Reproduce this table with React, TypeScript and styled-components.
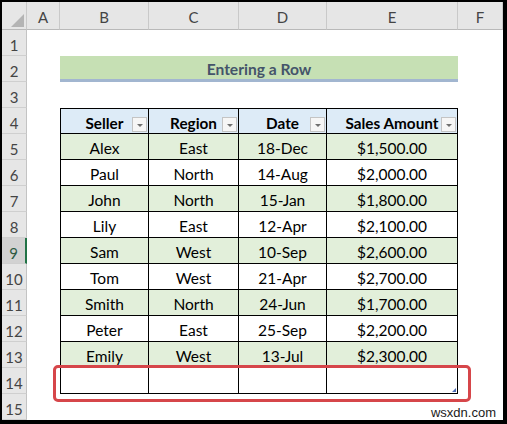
import React from "react";
import styled, { createGlobalStyle, css } from "styled-components";

const Global = createGlobalStyle`
  html, body { margin: 0; padding: 0; background: #000; }
  body { width: 507px; height: 424px; overflow: hidden; }
`;

const Frame = styled.div`
  position: relative;
  margin: 2px 0 0 2px;
  width: 501px;
  height: 418px;
  background: #fff;
  overflow: hidden;
  font-family: Lato, "Liberation Sans", sans-serif;
`;

const Sheet = styled.div`
  display: grid;
  grid-template-columns: 25px 33px 89px 90px 88px 131px 45px;
  grid-template-rows: 28px repeat(15, 26px);
`;

const Corner = styled.div`
  position: relative;
  background: #e6e6e6;
  border-right: 1px solid #c9c9c9;
  border-bottom: 1px solid #b9b9b9;
  box-sizing: border-box;
  &::after {
    content: "";
    position: absolute;
    right: 2px;
    bottom: 2px;
    width: 13px;
    height: 13px;
    background: #b4b4b4;
    clip-path: polygon(100% 0, 100% 100%, 0 100%);
  }
`;

const ColHead = styled.div`
  background: #e6e6e6;
  border-right: 1px solid #c9c9c9;
  border-bottom: 1px solid #b9b9b9;
  box-sizing: border-box;
  display: flex;
  align-items: center;
  justify-content: center;
  padding-top: 2px;
  font-size: 15px;
  color: #444;
`;

const RowHead = styled.div<{ $active?: boolean }>`
  background: ${(p) => (p.$active ? "#d2d2d2" : "#e6e6e6")};
  border-bottom: 1px solid #cfcfcf;
  border-right: ${(p) => (p.$active ? "2px solid #217346" : "1px solid #c3c3c3")};
  box-sizing: border-box;
  display: flex;
  align-items: center;
  justify-content: center;
  padding-top: 5px;
  font-size: 15px;
  color: ${(p) => (p.$active ? "#2f5a43" : "#444")};
`;

const Blank = styled.div``;

const Title = styled.div`
  grid-column: span 4;
  background: #c6e0b4;
  border-bottom: 3px solid #a2b6d0;
  box-sizing: border-box;
  display: flex;
  align-items: center;
  justify-content: center;
  padding-top: 2px;
  font-size: 15.6px;
  font-weight: 700;
  color: #44546a;
`;

const Cell = styled.div<{ $kind: "head" | "green" | "white"; $first?: boolean; $top?: boolean }>`
  position: relative;
  box-sizing: border-box;
  border-right: 1px solid #000;
  border-bottom: 1px solid #000;
  ${(p) => p.$first && css`border-left: 1px solid #000;`}
  ${(p) => p.$top && css`border-top: 1px solid #000;`}
  background: ${(p) => (p.$kind === "head" ? "#ddebf7" : p.$kind === "green" ? "#e2efda" : "#fff")};
  display: flex;
  align-items: center;
  justify-content: center;
  padding-top: 3px;
  font-size: ${(p) => (p.$kind === "head" ? "15.3px" : "15.5px")};
  font-weight: ${(p) => (p.$kind === "head" ? 700 : 400)};
  color: #000;
`;

const Filter = styled.span`
  position: absolute;
  right: 1px;
  bottom: 1px;
  width: 15px;
  height: 15px;
  box-sizing: border-box;
  border: 1px solid #c4c4c4;
  background: #f6f6f6;
  &::after {
    content: "";
    position: absolute;
    left: 4px;
    top: 6px;
    width: 0;
    height: 0;
    border-left: 3px solid transparent;
    border-right: 3px solid transparent;
    border-top: 3px solid #6f6f6f;
  }
`;

const Handle = styled.span`
  position: absolute;
  right: 1px;
  bottom: 1px;
  width: 4px;
  height: 4px;
  background: #4a6bb5;
  clip-path: polygon(100% 0, 100% 100%, 0 100%);
`;

const Highlight = styled.div`
  position: absolute;
  left: 51px;
  top: 363px;
  width: 418px;
  height: 37px;
  box-sizing: border-box;
  border: 3px solid #d6464a;
  border-radius: 5px;
  pointer-events: none;
`;

const Watermark = styled.div`
  position: absolute;
  right: 7px;
  bottom: 0px;
  font-family: "Liberation Sans", Arial, sans-serif;
  font-size: 13px;
  line-height: 14px;
  color: #1a1a1a;
`;

const headers = ["Seller", "Region", "Date", "Sales Amount"];
const data: string[][] = [
  ["Alex", "East", "18-Dec", "$1,500.00"],
  ["Paul", "North", "14-Aug", "$2,000.00"],
  ["John", "North", "15-Jan", "$1,800.00"],
  ["Lily", "East", "12-Apr", "$2,100.00"],
  ["Sam", "West", "10-Sep", "$2,600.00"],
  ["Tom", "West", "21-Apr", "$2,700.00"],
  ["Smith", "North", "24-Jun", "$1,700.00"],
  ["Peter", "East", "25-Sep", "$2,200.00"],
  ["Emily", "West", "13-Jul", "$2,300.00"],
];

export default function App() {
  const rows: React.ReactNode[] = [];
  for (let r = 1; r <= 15; r++) {
    rows.push(
      <RowHead key={`h${r}`} $active={r === 9}>
        {r}
      </RowHead>
    );
    rows.push(<Blank key={`a${r}`} />);
    if (r === 2) {
      rows.push(<Title key="title">Entering a Row</Title>);
    } else if (r === 4) {
      headers.forEach((h, i) =>
        rows.push(
          <Cell key={`hd${i}`} $kind="head" $first={i === 0} $top>
            {h}
            <Filter />
          </Cell>
        )
      );
    } else if (r >= 5 && r <= 13) {
      const row = data[r - 5];
      row.forEach((v, i) =>
        rows.push(
          <Cell key={`c${r}-${i}`} $kind={r % 2 === 1 ? "green" : "white"} $first={i === 0}>
            {v}
          </Cell>
        )
      );
    } else if (r === 14) {
      for (let i = 0; i < 4; i++) {
        rows.push(
          <Cell key={`e${i}`} $kind="white" $first={i === 0}>
            {i === 3 && <Handle />}
          </Cell>
        );
      }
    } else {
      for (let i = 0; i < 4; i++) rows.push(<Blank key={`b${r}-${i}`} />);
    }
    rows.push(<Blank key={`f${r}`} />);
  }

  return (
    <>
      <Global />
      <Frame>
        <Sheet>
          <Corner />
          {["A", "B", "C", "D", "E", "F"].map((c) => (
            <ColHead key={c}>{c}</ColHead>
          ))}
          {rows}
        </Sheet>
        <Highlight />
        <Watermark>wsxdn.com</Watermark>
      </Frame>
    </>
  );
}
